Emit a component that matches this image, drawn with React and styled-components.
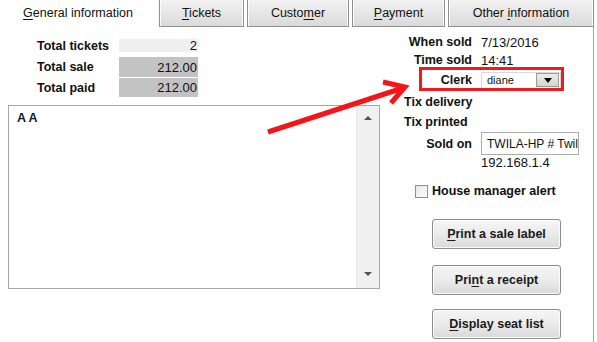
import React from "react";
import styled, { createGlobalStyle } from "styled-components";

const Global = createGlobalStyle`
  html, body { margin: 0; padding: 0; background: #ffffff; }
  body { font-family: "Liberation Sans", Arial, sans-serif; color: #111; }
`;

const Page = styled.div`
  position: relative;
  width: 597px;
  height: 342px;
  overflow: hidden;
  background: #fff;
`;

const TabBar = styled.div`
  display: flex;
  gap: 3px;
  height: 27px;
`;

const Tab = styled.div`
  box-sizing: border-box;
  width: ${(p) => p.$w}px;
  height: 27px;
  display: flex;
  align-items: center;
  justify-content: center;
  font-size: 12.5px;
  color: #111;
  padding-bottom: 1px;
  background: ${(p) =>
    p.$active ? "#fff" : "linear-gradient(#f3f3f3, #e6e6e6 50%, #dadada)"};
  border: ${(p) => (p.$active ? "none" : "1px solid #8e8f8f")};
  border-top: none;
  box-shadow: ${(p) => (p.$active ? "none" : "inset 1px 0 0 #fcfcfc, inset -1px 0 0 #fcfcfc")};
  u { text-decoration: underline; text-underline-offset: 2px; }
`;

const Body = styled.div`
  display: flex;
  width: 594px;
  height: 315px;
  box-sizing: border-box;
  border-right: 1px solid #a9a9a9;
`;

const LeftCol = styled.div`
  width: 386px;
  padding-top: 12px;
  box-sizing: border-box;
`;

const Totals = styled.div`
  display: grid;
  grid-template-columns: 82px 79px;
  padding-left: 37px;
`;

const TotalLabel = styled.div`
  font-weight: bold;
  font-size: 12.5px;
  height: ${(p) => p.$h}px;
  margin-top: ${(p) => p.$mt || 0}px;
  display: flex;
  align-items: center;
`;

const TotalValue = styled.div`
  height: ${(p) => p.$h}px;
  margin-top: ${(p) => p.$mt || 0}px;
  background: ${(p) => (p.$light ? "#efefef" : "#c3c3c3")};
  font-size: 13px;
  display: flex;
  align-items: center;
  justify-content: flex-end;
  padding-right: 1px;
`;

const Notes = styled.div`
  margin: 8px 0 0 8px;
  width: 372px;
  height: 184px;
  box-sizing: border-box;
  border: 1px solid #a6a6a6;
  display: flex;
`;

const NotesText = styled.div`
  flex: 1;
  padding: 5px 8px;
  font-size: 12.5px;
  font-weight: bold;
  color: #0e1a2b;
`;

const Scrollbar = styled.div`
  width: 22px;
  background: #f0f0f0;
  border-left: 1px solid #e6e6e6;
  display: flex;
  flex-direction: column;
  justify-content: space-between;
  align-items: center;
  padding: 10px 0 12px;
`;

const ScrollArrow = styled.div`
  width: 0;
  height: 0;
  border-left: 4px solid transparent;
  border-right: 4px solid transparent;
  ${(p) =>
    p.$down ? "border-top: 4px solid #555;" : "border-bottom: 4px solid #555;"}
`;

const RightCol = styled.div`
  flex: 1;
  padding-top: 6px;
  display: flex;
  flex-direction: column;
`;

const InfoRow = styled.div`
  position: relative;
  display: grid;
  grid-template-columns: 68px 1fr;
  column-gap: 9px;
  align-items: center;
  padding-left: 18px;
  height: ${(p) => p.$h}px;
`;

const Label = styled.div`
  font-weight: bold;
  font-size: 12.5px;
  text-align: ${(p) => (p.$left ? "left" : "right")};
  white-space: nowrap;
  grid-column: ${(p) => (p.$span ? "1 / 3" : "auto")};
`;

const Value = styled.div`
  font-size: 13px;
  white-space: nowrap;
`;

const Highlight = styled.div`
  position: absolute;
  left: 33px;
  top: -2px;
  width: 145px;
  height: 24px;
  box-sizing: border-box;
  border: 3px solid #ee1a1f;
  pointer-events: none;
`;

const Combo = styled.div`
  width: 80px;
  height: 17px;
  box-sizing: border-box;
  border: 1px solid #dadada;
  display: flex;
  align-items: center;
  justify-content: space-between;
  font-size: 11px;
  padding: 0 1px 0 5px;
`;

const ComboButton = styled.div`
  width: 23px;
  height: 14px;
  box-sizing: border-box;
  border: 1px solid #9a9a9a;
  background: linear-gradient(#ececec, #d4d4d4);
  display: flex;
  align-items: center;
  justify-content: center;
  &::after {
    content: "";
    border-left: 4px solid transparent;
    border-right: 4px solid transparent;
    border-top: 5px solid #000;
  }
`;

const TextBox = styled.div`
  width: 98px;
  height: 23px;
  box-sizing: border-box;
  border: 1px solid #abadb3;
  font-size: 12px;
  padding: 0 3px 0 5px;
  display: flex;
  align-items: center;
  white-space: nowrap;
`;

const CheckRow = styled.label`
  display: flex;
  align-items: center;
  gap: 4px;
  margin: 15px 0 0 29px;
  height: 16px;
  font-weight: bold;
  font-size: 12.5px;
`;

const CheckBox = styled.span`
  width: 13px;
  height: 13px;
  box-sizing: border-box;
  border: 1px solid #8f8f8f;
  background: linear-gradient(135deg, #e6e6e6, #fdfdfd);
`;

const ActionButton = styled.div`
  margin: ${(p) => p.$mt}px 0 0 46px;
  width: 129px;
  height: 30px;
  box-sizing: border-box;
  border: 1px solid #8c8c8c;
  border-radius: 3px;
  background: linear-gradient(#f5f5f5, #ebebeb 50%, #dadada);
  box-shadow: inset 0 0 0 1px #fbfbfb;
  display: flex;
  align-items: center;
  justify-content: center;
  font-weight: bold;
  font-size: 12.5px;
  color: #1a1a1a;
  u { text-underline-offset: 2px; }
`;

const ArrowLayer = styled.svg`
  position: absolute;
  left: 0;
  top: 0;
  pointer-events: none;
`;

export default function App() {
  return (
    <Page>
      <Global />
      <TabBar>
        <Tab $w={156} $active>
          <span><u>G</u>eneral information</span>
        </Tab>
        <Tab $w={85}>
          <span><u>T</u>ickets</span>
        </Tab>
        <Tab $w={102}>
          <span>Custo<u>m</u>er</span>
        </Tab>
        <Tab $w={93}>
          <span><u>P</u>ayment</span>
        </Tab>
        <Tab $w={146}>
          <span>Other <u>i</u>nformation</span>
        </Tab>
      </TabBar>
      <Body>
        <LeftCol>
          <Totals>
            <TotalLabel $h={13}>Total tickets</TotalLabel>
            <TotalValue $h={13} $light>2</TotalValue>
            <TotalLabel $h={20} $mt={5}>Total sale</TotalLabel>
            <TotalValue $h={20} $mt={5}>212.00</TotalValue>
            <TotalLabel $h={19} $mt={1}>Total paid</TotalLabel>
            <TotalValue $h={19} $mt={1}>212.00</TotalValue>
          </Totals>
          <Notes>
            <NotesText>A A</NotesText>
            <Scrollbar>
              <ScrollArrow />
              <ScrollArrow $down />
            </Scrollbar>
          </Notes>
        </LeftCol>
        <RightCol>
          <InfoRow $h={18}>
            <Label>When sold</Label>
            <Value>7/13/2016</Value>
          </InfoRow>
          <InfoRow $h={18}>
            <Label>Time sold</Label>
            <Value>14:41</Value>
          </InfoRow>
          <InfoRow $h={22}>
            <Label>Clerk</Label>
            <Combo>
              <span>diane</span>
              <ComboButton />
            </Combo>
            <Highlight />
          </InfoRow>
          <InfoRow $h={21}>
            <Label $left $span>Tix delivery</Label>
          </InfoRow>
          <InfoRow $h={20}>
            <Label $left $span>Tix printed</Label>
          </InfoRow>
          <InfoRow $h={23}>
            <Label>Sold on</Label>
            <TextBox>TWILA-HP # Twil</TextBox>
          </InfoRow>
          <InfoRow $h={13}>
            <span />
            <Value>192.168.1.4</Value>
          </InfoRow>
          <CheckRow>
            <CheckBox />
            House manager alert
          </CheckRow>
          <ActionButton $mt={20}>
            <span><u>P</u>rint a sale label</span>
          </ActionButton>
          <ActionButton $mt={16}>
            <span>Pri<u>n</u>t a receipt</span>
          </ActionButton>
          <ActionButton $mt={14}>
            <span><u>D</u>isplay seat list</span>
          </ActionButton>
        </RightCol>
      </Body>
      <ArrowLayer width="597" height="342" viewBox="0 0 597 342">
        <g stroke="#f2161b" strokeWidth="5" fill="none" strokeLinecap="butt" strokeLinejoin="miter">
          <line x1="268" y1="132" x2="403" y2="88" />
          <polyline points="383,82 405,87 391,103" />
        </g>
      </ArrowLayer>
    </Page>
  );
}
